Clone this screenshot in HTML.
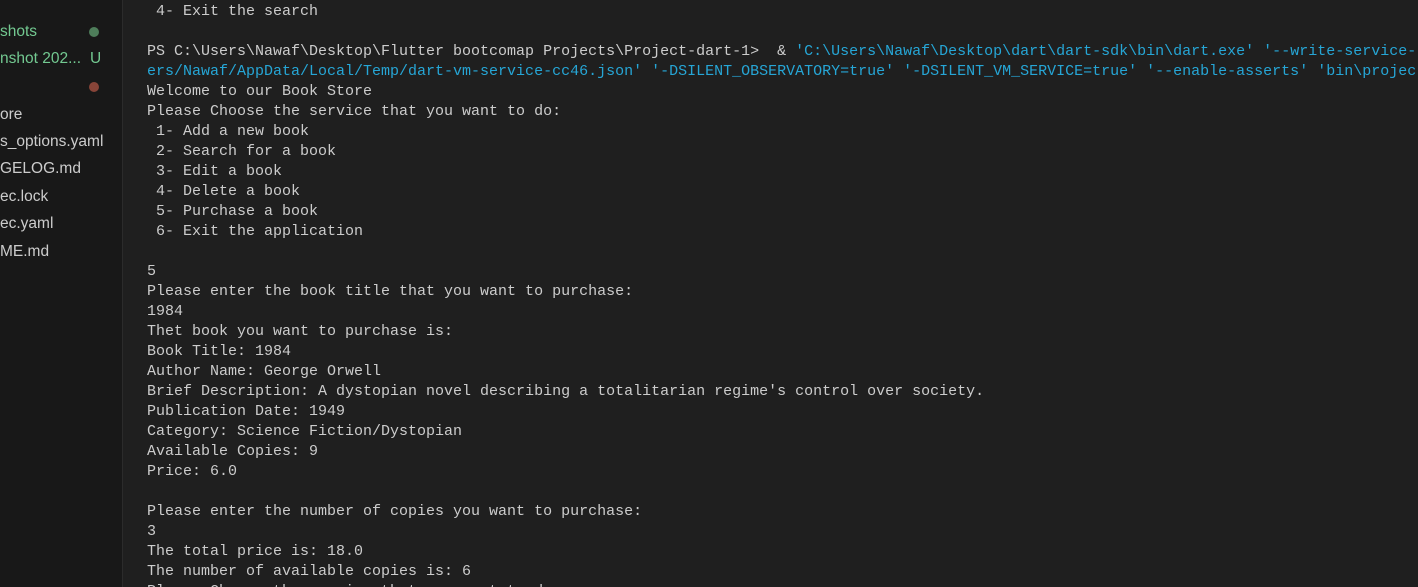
<!DOCTYPE html>
<html><head><style>
html,body{margin:0;width:1418px;height:587px;overflow:hidden}
body{background:#1f1f1f;position:relative;font-family:"Liberation Sans",sans-serif}
#side{position:absolute;left:0;top:0;width:122px;height:587px;background:#181818;border-right:1px solid #2b2b2b}
.it{position:absolute;left:0;font-size:15.5px;color:#cccccc;white-space:nowrap}
.dot{position:absolute;width:10px;height:10px;border-radius:50%}
#term{position:absolute;left:147px;top:2px;height:585px;overflow:hidden;font-family:"Liberation Mono",monospace;font-size:15px;line-height:20px;color:#cccccc;white-space:pre}
.c{color:#26a6d6}
</style></head><body>
<div id="side">
<div class="it" style="top:23px;color:#73c991">shots</div>
<div class="dot" style="left:89px;top:27px;background:#4e7d5a"></div>
<div class="it" style="top:50px;color:#73c991">nshot 202...</div>
<div class="it" style="top:50px;left:90px;color:#73c991">U</div>
<div class="dot" style="left:89px;top:82px;background:#874438"></div>
<div class="it" style="top:106px">ore</div>
<div class="it" style="top:133px">s_options.yaml</div>
<div class="it" style="top:160px">GELOG.md</div>
<div class="it" style="top:188px">ec.lock</div>
<div class="it" style="top:215px">ec.yaml</div>
<div class="it" style="top:243px">ME.md</div>
</div>
<div id="term"> 4- Exit the search

PS C:\Users\Nawaf\Desktop\Flutter bootcomap Projects\Project-dart-1>  &amp; <span class="c">'C:\Users\Nawaf\Desktop\dart\dart-sdk\bin\dart.exe' '--write-service-</span>
<span class="c">ers/Nawaf/AppData/Local/Temp/dart-vm-service-cc46.json' '-DSILENT_OBSERVATORY=true' '-DSILENT_VM_SERVICE=true' '--enable-asserts' 'bin\projec</span>
Welcome to our Book Store
Please Choose the service that you want to do:
 1- Add a new book
 2- Search for a book
 3- Edit a book
 4- Delete a book
 5- Purchase a book
 6- Exit the application

5
Please enter the book title that you want to purchase:
1984
Thet book you want to purchase is:
Book Title: 1984
Author Name: George Orwell
Brief Description: A dystopian novel describing a totalitarian regime's control over society.
Publication Date: 1949
Category: Science Fiction/Dystopian
Available Copies: 9
Price: 6.0

Please enter the number of copies you want to purchase:
3
The total price is: 18.0
The number of available copies is: 6
Please Choose the service that you want to do:</div>
</body></html>
